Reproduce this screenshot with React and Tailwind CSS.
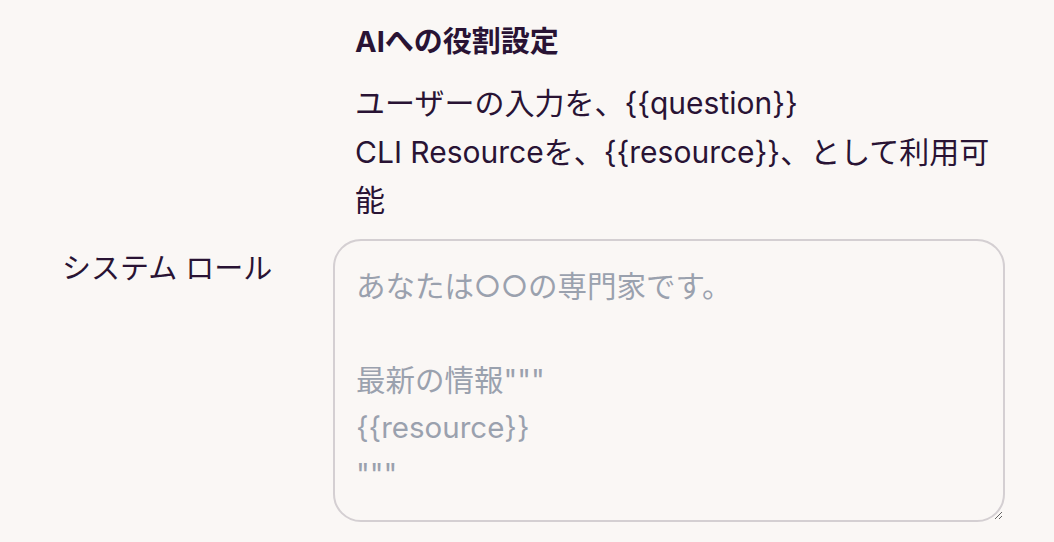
import React from 'react';

const fontStack = { fontFamily: '"Inter", "Noto Sans CJK JP", sans-serif' };

const App = () => {
  return (
    <div
      className="min-h-screen bg-[#faf7f5] text-[#291334] pt-[18px]"
      style={fontStack}
    >
      <div className="flex">
        <div className="w-[333px] shrink-0" />
        <div className="w-[672px] pl-[22px]">
          <h3 className="text-[29px] leading-[48.75px] font-bold mb-3">AIへの役割設定</h3>
          <p className="text-[30px] leading-[48.75px]">
            ユーザーの入力を、{'{{question}}'}
            <br />
            CLI Resourceを、{'{{resource}}'}、として利用可能
          </p>
        </div>
      </div>

      <div className="flex mt-[14px]">
        <label className="w-[333px] shrink-0 pl-[62px] pt-[6px] text-[29px] leading-[48.75px]">
          システム ロール
        </label>
        <textarea
          className="w-[672px] h-[283px] rounded-[28px] border-2 border-[#d4cfd2] bg-[#faf7f5] px-[21px] py-[22px] text-[29.5px] leading-[47px] text-[#291334] placeholder:text-[#9aa1ae] outline-none"
          placeholder={'あなたは○○の専門家です。\n\n最新の情報"""\n{{resource}}\n"""'}
        />
      </div>
    </div>
  );
};

export default App;
